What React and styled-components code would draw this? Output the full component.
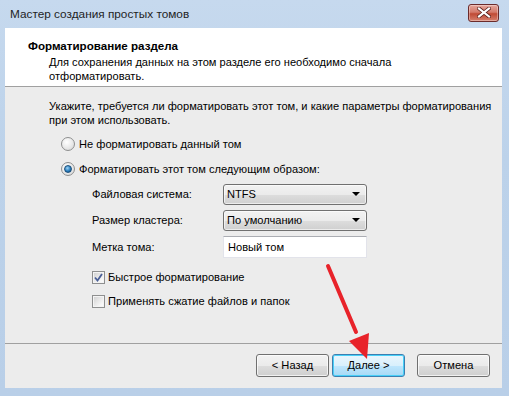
import React from 'react';
import styled, { createGlobalStyle } from 'styled-components';

const GlobalStyle = createGlobalStyle`
  html, body {
    margin: 0;
    padding: 0;
    background: #f7f7ec;
  }
  body {
    font-family: "Liberation Sans", Arial, sans-serif;
    font-size: 11.1px;
    color: #000;
  }
`;

const Window = styled.div`
  position: relative;
  width: 509px;
  height: 396px;
  box-sizing: border-box;
  display: flex;
  flex-direction: column;
  padding: 0 7px 8px 5px;
  background: linear-gradient(180deg, #c6d9ee 0%, #bcd2ea 40%, #b9cfe8 100%);
`;

const TitleBar = styled.div`
  height: 28px;
  display: flex;
  align-items: center;
  justify-content: space-between;
  padding-left: 5px;
  font-size: 11.8px;
  color: #1e1e1e;
`;

const CloseButton = styled.div`
  width: 29px;
  height: 16px;
  margin-top: -3px;
  margin-right: 3px;
  border: 1px solid #6b2b2b;
  border-radius: 3px;
  display: flex;
  align-items: center;
  justify-content: center;
  background: linear-gradient(180deg, #e5a79c 0%, #d47a6b 45%, #c04a35 55%, #d6806e 100%);
  box-shadow: inset 0 0 0 1px rgba(255, 255, 255, 0.35);
`;

const Client = styled.div`
  flex: 1;
  display: flex;
  flex-direction: column;
  background: #ececec;
`;

const Header = styled.div`
  height: 59px;
  box-sizing: border-box;
  background: #fff;
  border-bottom: 1px solid #a0a0a0;
  padding: 10px 0 0 23px;
`;

const HeaderTitle = styled.div`
  font-weight: bold;
  font-size: 11.6px;
  line-height: 15px;
`;

const HeaderText = styled.div`
  padding: 2px 0 0 21px;
  line-height: 14px;
  width: 400px;
`;

const Body = styled.div`
  flex: 1;
  padding: 12px 0 0 44px;
  display: flex;
  flex-direction: column;
`;

const Intro = styled.div`
  line-height: 14px;
  width: 452px;
`;

const OptionRow = styled.label`
  display: flex;
  align-items: center;
  gap: 4px;
  height: 25px;
`;

const Radio = styled.span`
  width: 12px;
  height: 12px;
  border-radius: 50%;
  border: 1px solid #8e8f8f;
  box-sizing: content-box;
  display: flex;
  align-items: center;
  justify-content: center;
  background: radial-gradient(circle at 40% 35%, #ffffff 0%, #e6e6e6 60%, #cfcfcf 100%);

  &::after {
    content: '';
    display: ${p => (p.checked ? 'block' : 'none')};
    width: 6px;
    height: 6px;
    border-radius: 50%;
    background: radial-gradient(circle at 40% 35%, #9fd4f5 0%, #2a7fc0 55%, #0d3f6b 100%);
    border: 1px solid #1c4f7a;
  }
`;

const RadioList = styled.div`
  margin-top: 4px;
  margin-left: 12px;
  display: flex;
  flex-direction: column;
`;

const Form = styled.div`
  margin-left: 43px;
  display: grid;
  grid-template-columns: 131px 144px;
  grid-template-rows: 26px 26px 28px;
  align-items: center;
`;

const FieldLabel = styled.span``;

const Select = styled.div`
  height: 21px;
  box-sizing: border-box;
  border: 1px solid #707070;
  border-radius: 3px;
  padding: 0 6px 0 3px;
  display: flex;
  align-items: center;
  justify-content: space-between;
  background: linear-gradient(180deg, #f2f2f2 0%, #ebebeb 50%, #dddddd 51%, #cfcfcf 100%);
  box-shadow: inset 0 0 0 1px rgba(255, 255, 255, 0.6);
`;

const Caret = styled.span`
  width: 0;
  height: 0;
  border-left: 4px solid transparent;
  border-right: 4px solid transparent;
  border-top: 4px solid #000;
`;

const TextInput = styled.div`
  height: 22px;
  box-sizing: border-box;
  border: 1px solid #e2e3ea;
  border-top-color: #abadb3;
  background: #fff;
  padding: 0 4px;
  display: flex;
  align-items: center;
`;

const Checks = styled.div`
  margin-top: 4px;
  margin-left: 43px;
  display: flex;
  flex-direction: column;
`;

const CheckRow = styled.label`
  display: flex;
  align-items: center;
  gap: 3px;
  height: 24px;
`;

const CheckBox = styled.span`
  width: 11px;
  height: 11px;
  border: 1px solid #8e8f8f;
  display: flex;
  align-items: center;
  justify-content: center;
  background: linear-gradient(135deg, #cfcfcf 0%, #f4f4f4 70%, #ffffff 100%);
  box-shadow: inset 0 0 0 1px #f4f4f4;
`;

const Footer = styled.div`
  height: 45px;
  box-sizing: border-box;
  border-top: 1px solid #a0a0a0;
  display: flex;
  align-items: center;
  justify-content: flex-end;
  padding: 0 12px 2px 0;
`;

const Button = styled.div`
  width: 73px;
  height: 23px;
  box-sizing: border-box;
  margin-left: ${p => p.gap || 0}px;
  border: 1px solid ${p => (p.primary ? '#3c7fb1' : '#707070')};
  border-radius: 3px;
  display: flex;
  align-items: center;
  justify-content: center;
  background: ${p =>
    p.primary
      ? 'linear-gradient(180deg, #eaf6fd 0%, #d9f0fc 50%, #bee6fd 51%, #a7d9f5 100%)'
      : 'linear-gradient(180deg, #f2f2f2 0%, #ebebeb 50%, #dddddd 51%, #cfcfcf 100%)'};
  box-shadow: inset 0 0 0 1px ${p => (p.primary ? '#48d0f8' : 'rgba(255,255,255,0.7)')};
`;

const Arrow = styled.svg`
  position: absolute;
  left: 0;
  top: 0;
  pointer-events: none;
`;

export default function App() {
  return (
    <>
      <GlobalStyle />
      <Window>
        <TitleBar>
          <span>Мастер создания простых томов</span>
          <CloseButton>
            <svg width="14" height="11" viewBox="0 0 14 11">
              <path
                d="M2 1.5 L12 9.5 M12 1.5 L2 9.5"
                stroke="#5a1f1a"
                strokeWidth="3.6"
                strokeLinecap="square"
              />
              <path
                d="M2 1.5 L12 9.5 M12 1.5 L2 9.5"
                stroke="#fff"
                strokeWidth="2.2"
                strokeLinecap="square"
              />
            </svg>
          </CloseButton>
        </TitleBar>
        <Client>
          <Header>
            <HeaderTitle>Форматирование раздела</HeaderTitle>
            <HeaderText>
              Для сохранения данных на этом разделе его необходимо сначала отформатировать.
            </HeaderText>
          </Header>
          <Body>
            <Intro>
              Укажите, требуется ли форматировать этот том, и какие параметры форматирования
              при этом использовать.
            </Intro>
            <RadioList>
              <OptionRow>
                <Radio />
                Не форматировать данный том
              </OptionRow>
              <OptionRow>
                <Radio checked />
                Форматировать этот том следующим образом:
              </OptionRow>
            </RadioList>
            <Form>
              <FieldLabel>Файловая система:</FieldLabel>
              <Select>
                NTFS
                <Caret />
              </Select>
              <FieldLabel>Размер кластера:</FieldLabel>
              <Select>
                По умолчанию
                <Caret />
              </Select>
              <FieldLabel>Метка тома:</FieldLabel>
              <TextInput>Новый том</TextInput>
            </Form>
            <Checks>
              <CheckRow>
                <CheckBox>
                  <svg width="9" height="9" viewBox="0 0 9 9">
                    <path d="M1 4.5 L3.5 7.5 L8 1" fill="none" stroke="#4a5f97" strokeWidth="1.8" />
                  </svg>
                </CheckBox>
                Быстрое форматирование
              </CheckRow>
              <CheckRow>
                <CheckBox />
                Применять сжатие файлов и папок
              </CheckRow>
            </Checks>
          </Body>
          <Footer>
            <Button>&lt; Назад</Button>
            <Button primary gap={3}>Далее &gt;</Button>
            <Button gap={12}>Отмена</Button>
          </Footer>
        </Client>
        <Arrow width="509" height="396" viewBox="0 0 509 396">
          <line x1="328" y1="266" x2="356" y2="332" stroke="#e8232a" strokeWidth="4" strokeLinecap="round" />
          <polygon points="367,359 349,341 369,333" fill="#e8232a" />
        </Arrow>
      </Window>
    </>
  );
}
